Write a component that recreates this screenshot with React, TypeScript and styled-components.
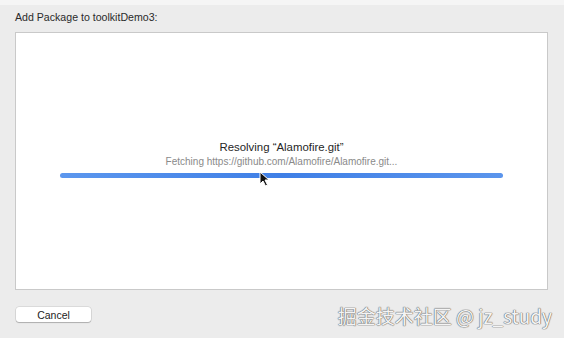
import React from "react";
import styled, { createGlobalStyle } from "styled-components";

const Global = createGlobalStyle`
  html, body { margin: 0; padding: 0; background: #ececec; }
  body { font-family: "Liberation Sans", Arial, sans-serif; }
`;

const Window = styled.div`
  position: relative;
  width: 564px;
  height: 338px;
  box-sizing: border-box;
  background: #ececec;
  border-top: 5px solid #f5f5f5;
  display: flex;
  flex-direction: column;
  overflow: hidden;
`;

const Title = styled.div`
  padding: 6px 0 0 15px;
  height: 21px;
  font-size: 10.6px;
  color: #2a2a2a;
`;

const Panel = styled.div`
  margin-left: 15px;
  width: 533px;
  height: 258px;
  box-sizing: border-box;
  background: #fff;
  border: 1px solid #c9c9c9;
  display: flex;
  flex-direction: column;
  align-items: center;
  padding-top: 107px;
`;

const Heading = styled.div`
  font-size: 11.4px;
  color: #262626;
  line-height: 14px;
`;

const Sub = styled.div`
  margin-top: 1px;
  font-size: 10px;
  color: #8a8a8a;
  line-height: 13px;
`;

const Track = styled.div`
  position: relative;
  margin-top: 5px;
  width: 443px;
  height: 5px;
  border-radius: 3px;
  background: linear-gradient(90deg, #5c97ee 0%, #3f7fe6 50%, #5b95ec 100%);
`;

const Pointer = styled.svg`
  position: absolute;
  left: 199px;
  top: -2px;
`;

const Footer = styled.div`
  display: flex;
  align-items: center;
  padding: 17px 0 0 16px;
`;

const Button = styled.button`
  width: 75px;
  height: 15px;
  padding: 0;
  border: none;
  border-radius: 3px;
  background: #fff;
  box-shadow: 0 0 0 0.5px rgba(0, 0, 0, 0.15), 0 1px 1px rgba(0, 0, 0, 0.2);
  font-family: "Liberation Sans", Arial, sans-serif;
  font-size: 10.5px;
  color: #222;
`;

const Watermark = styled.div`
  position: absolute;
  right: 12px;
  bottom: 10px;
  font-family: "Noto Sans CJK SC", "Liberation Sans", sans-serif;
  font-size: 19px;
  line-height: 24px;
  color: #f4f4f4;
  text-shadow: 0 0 1px #6a6a6a, 0 0 1px #6a6a6a, 0 0 1px #6a6a6a;
  white-space: nowrap;
`;

export default function App() {
  return (
    <>
      <Global />
      <Window>
        <Title>Add Package to toolkitDemo3:</Title>
        <Panel>
          <Heading>Resolving “Alamofire.git”</Heading>
          <Sub>Fetching https://github.com/Alamofire/Alamofire.git...</Sub>
          <Track>
            <Pointer width="12" height="16" viewBox="0 0 12 16">
              <path d="M1 1 L1 13 L4 10 L6.5 15 L8.5 14 L6 9 L10 9 Z" fill="#111" stroke="#fff" strokeWidth="1" />
            </Pointer>
          </Track>
        </Panel>
        <Footer>
          <Button>Cancel</Button>
        </Footer>
        <Watermark>掘金技术社区 @ jz_study</Watermark>
      </Window>
    </>
  );
}
